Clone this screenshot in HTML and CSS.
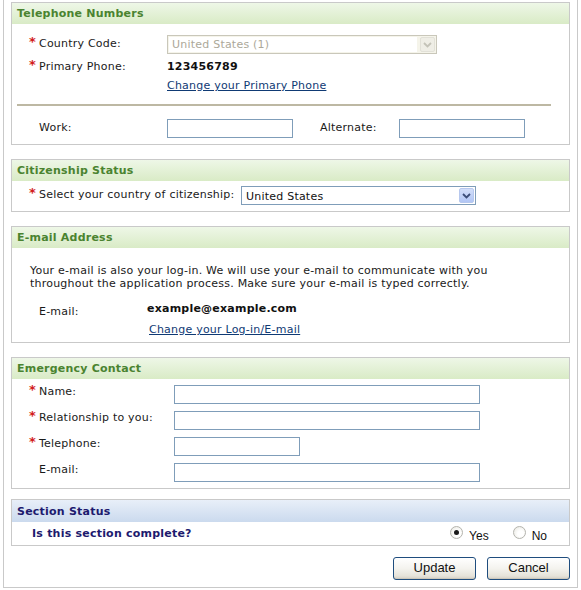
FILE: index.html
```html
<!DOCTYPE html>
<html>
<head>
<meta charset="utf-8">
<link rel="stylesheet" href="styles.css">
</head>
<body>
<div class="page">

  <div class="section">
    <div class="head">Telephone Numbers</div>
    <div class="body tel">
      <div class="row r1">
        <div class="lbl w155"><span class="req">*</span>Country Code:</div>
        <div class="select disabled w270">
          <span class="sel-text">United States (1)</span>
          <span class="arrow"><svg width="9" height="6" viewBox="0 0 9 6"><path d="M1 1 L4.5 4.5 L8 1" fill="none" stroke="#c4c3b8" stroke-width="1.8"/></svg></span>
        </div>
      </div>
      <div class="row r2">
        <div class="lbl w155"><span class="req">*</span>Primary Phone:</div>
        <div class="val">123456789</div>
      </div>
      <div class="row r3">
        <div class="w155"></div>
        <a class="link" href="#">Change your Primary Phone</a>
      </div>
      <div class="rule"></div>
      <div class="row r4">
        <div class="lbl w155"><span class="noreq"></span>Work:</div>
        <input class="txt w126" type="text">
        <div class="lbl alt">Alternate:</div>
        <input class="txt w126" type="text">
      </div>
    </div>
  </div>

  <div class="section">
    <div class="head">Citizenship Status</div>
    <div class="body cit">
      <div class="row r19">
        <div class="lbl w202"><span class="req">*</span>Select your country of citizenship:</div>
        <div class="select w235">
          <span class="sel-text dark">United States</span>
          <span class="arrow blue"><svg width="9" height="6" viewBox="0 0 9 6"><path d="M1 1 L4.5 4.5 L8 1" fill="none" stroke="#3b4d78" stroke-width="1.8"/></svg></span>
        </div>
      </div>
    </div>
  </div>

  <div class="section">
    <div class="head">E-mail Address</div>
    <div class="body mail">
      <p class="intro">Your e-mail is also your log-in. We will use your e-mail to communicate with you<br>throughout the application process. Make sure your e-mail is typed correctly.</p>
      <div class="row mrow">
        <div class="lbl w135"><span class="noreq"></span>E-mail:</div>
        <div class="val">example@example.com</div>
      </div>
      <div class="mlink"><a class="link" href="#">Change your Log-in/E-mail</a></div>
    </div>
  </div>

  <div class="section s4">
    <div class="head">Emergency Contact</div>
    <div class="body emg">
      <div class="row erow">
        <div class="lbl w162"><span class="req">*</span>Name:</div>
        <input class="txt w306" type="text">
      </div>
      <div class="row erow">
        <div class="lbl w162"><span class="req">*</span>Relationship to you:</div>
        <input class="txt w306" type="text">
      </div>
      <div class="row erow">
        <div class="lbl w162"><span class="req">*</span>Telephone:</div>
        <input class="txt w126" type="text">
      </div>
      <div class="row erow">
        <div class="lbl w162"><span class="noreq"></span>E-mail:</div>
        <input class="txt w306" type="text">
      </div>
    </div>
  </div>

  <div class="section status">
    <div class="head">Section Status</div>
    <div class="body stat">
      <div class="question">Is this section complete?</div>
      <div class="radios">
        <label class="opt"><span class="radio checked"></span>Yes</label>
        <label class="opt"><span class="radio"></span>No</label>
      </div>
    </div>
  </div>

  <div class="buttons">
    <button class="btn" type="button">Update</button>
    <button class="btn" type="button">Cancel</button>
  </div>

</div>
</body>
</html>
```

FILE: styles.css
```css
html, body {
  margin: 0;
  padding: 0;
  background: #ffffff;
}
body {
  font-family: "DejaVu Sans", Verdana, sans-serif;
  font-size: 11px;
  letter-spacing: 0.22px;
  color: #1a1a1a;
}
.page {
  margin-left: 3px;
  width: 559px;
  padding: 2px 7px 7px 7px;
  border: 1px solid #c9c9c9;
  border-top: none;
}
.section {
  border: 1px solid #c9c9c9;
  margin-bottom: 14px;
}
.section.s4 {
  margin-bottom: 10px;
}
.section.status {
  margin-bottom: 11px;
}
.head {
  height: 21px;
  line-height: 21px;
  padding-left: 5px;
  font-weight: bold;
  color: #4a8330;
  background: linear-gradient(to bottom, #eef7e7, #d9ebc6);
}
.status .head {
  height: 22px;
  line-height: 24px;
  color: #1d1a6e;
  background: linear-gradient(to bottom, #e8eff9, #cbdaee);
}
.row {
  display: flex;
  align-items: center;
}
.lbl {
  box-sizing: border-box;
  padding-left: 17px;
  white-space: nowrap;
  flex: none;
}
.req, .noreq {
  display: inline-block;
  width: 10px;
  color: #d21c1c;
}
.req {
  font-size: 13px;
  font-weight: bold;
  line-height: 10px;
  vertical-align: 1px;
  letter-spacing: 0;
}
.w155 { width: 155px; flex: none; }
.w202 { width: 229px; }
.w135 { width: 135px; }
.w162 { width: 162px; }
.w126 { width: 126px; }
.w306 { width: 306px; }
.w270 { width: 270px; }
.w235 { width: 235px; }

.tel { padding: 11px 0 6px 0; }
.r1 { height: 19px; }
.r1 .lbl { padding-bottom: 2px; }
.r2 { height: 24px; }
.r3 { height: 15px; }
.rule {
  height: 2px;
  background: #bdb8a3;
  margin: 11px 18px 13px 5px;
}
.r4 { height: 19px; }
.r4 .lbl { padding-bottom: 3px; }
.alt {
  width: 79px;
  margin-left: 27px;
  padding-left: 0;
}
.val {
  font-weight: bold;
  color: #111;
  line-height: 13px;
}
.link {
  color: #0f3a74;
  text-decoration: underline;
  line-height: 13px;
}
.txt {
  box-sizing: border-box;
  height: 19px;
  border: 1px solid #7f9db9;
  margin: 0;
  padding: 0 3px;
  background: #fff;
  font-family: inherit;
  font-size: 11px;
  flex: none;
}
.select {
  box-sizing: border-box;
  height: 19px;
  border: 1px solid #7f9db9;
  display: flex;
  align-items: center;
  padding: 1px;
  background: #fff;
  flex: none;
}
.select.disabled {
  border-color: #c9c7ba;
  background: #f5f4ea;
}
.select.disabled .sel-text {
  background: #fff;
  align-self: stretch;
  display: flex;
  align-items: center;
  margin-right: 3px;
}
.sel-text {
  flex: 1;
  padding-left: 3px;
  color: #aca899;
  white-space: nowrap;
}
.sel-text.dark { color: #111; padding-top: 1px; }
.arrow {
  width: 15px;
  height: 15px;
  box-sizing: border-box;
  display: flex;
  align-items: center;
  justify-content: center;
  background: #efeee6;
  border: 1px solid #e2e1d8;
  border-radius: 2px;
}
.arrow.blue {
  background: linear-gradient(to bottom, #d2def9, #b2c6f5);
  border-color: #b7c8ee;
}

.cit { padding: 5px 0 6px 0; }
.r19 { height: 19px; }
.r19 .lbl { padding-bottom: 2px; }

.mail { padding: 16px 0 6px 0; }
.intro {
  margin: 0;
  padding-left: 18px;
  line-height: 13px;
}
.mrow {
  align-items: flex-start;
  margin-top: 12px;
}
.mrow .lbl {
  padding-top: 3px;
  line-height: 13px;
}
.mlink {
  margin-top: 5px;
  padding-left: 137px;
  line-height: 13px;
}

.emg { padding: 6px 0 6px 0; }
.erow {
  align-items: flex-start;
  margin-bottom: 7px;
}
.erow:last-child { margin-bottom: 0; }
.erow .lbl {
  line-height: 13px;
  padding-top: 0;
}

.stat {
  height: 23px;
  display: flex;
  align-items: center;
}
.question {
  padding-left: 20px;
  font-weight: bold;
  color: #1d1a6e;
}
.radios {
  margin-left: auto;
  padding-right: 22px;
  padding-top: 4px;
  display: flex;
  align-items: center;
  font-family: "Liberation Sans", Arial, sans-serif;
  font-size: 12px;
  letter-spacing: 0;
  color: #111;
}
.opt {
  display: flex;
  align-items: center;
}
.opt + .opt { margin-left: 24px; }
.radio {
  box-sizing: border-box;
  width: 13px;
  height: 13px;
  border-radius: 50%;
  border: 1px solid #b4b4ae;
  background: radial-gradient(circle at 60% 60%, #ffffff 30%, #e6e5dd 100%);
  margin-right: 6px;
  position: relative;
  top: -3px;
}
.radio.checked::after {
  content: "";
  position: absolute;
  left: 3px;
  top: 3px;
  width: 5px;
  height: 5px;
  border-radius: 50%;
  background: #1a1a1a;
}

.buttons {
  display: flex;
  justify-content: flex-end;
  gap: 11px;
  height: 23px;
}
.btn {
  box-sizing: border-box;
  width: 83px;
  height: 23px;
  margin: 0;
  padding: 0 0 1px 0;
  border: 1px solid #1f4d7e;
  border-radius: 3px;
  background: linear-gradient(to bottom, #ffffff 0%, #f4f3ee 50%, #e6e3da 85%, #d6d0c5 100%);
  font-family: "Liberation Sans", Arial, sans-serif;
  font-size: 13px;
  letter-spacing: 0;
  line-height: 20px;
  color: #111;
  box-shadow: inset 0 -1px 0 #cdc8bb;
}
```
